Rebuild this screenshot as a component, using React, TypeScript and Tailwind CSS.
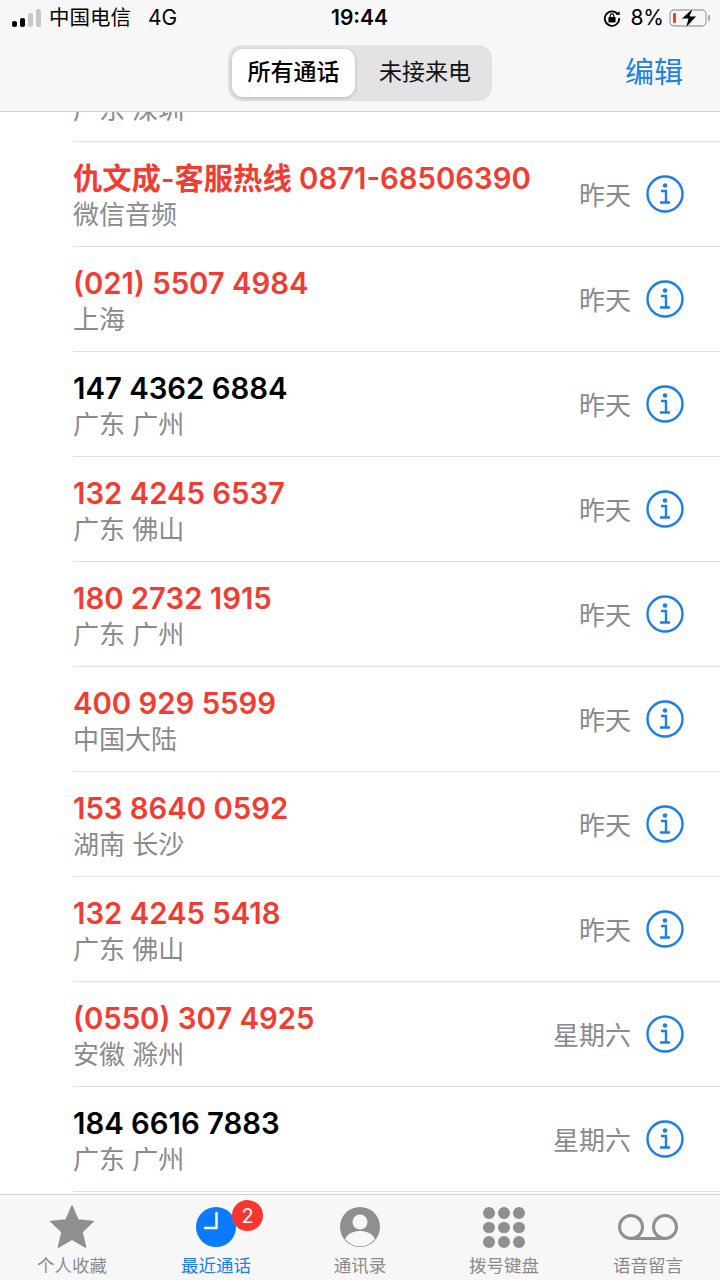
import React from 'react';

const calls = [
  { name: '\u00a0', place: '广东 深圳', time: '', missed: false },
  { name: '仇文成-客服热线 0871-68506390', place: '微信音频', time: '昨天', missed: true },
  { name: '(021) 5507 4984', place: '上海', time: '昨天', missed: true },
  { name: '147 4362 6884', place: '广东 广州', time: '昨天', missed: false },
  { name: '132 4245 6537', place: '广东 佛山', time: '昨天', missed: true },
  { name: '180 2732 1915', place: '广东 广州', time: '昨天', missed: true },
  { name: '400 929 5599', place: '中国大陆', time: '昨天', missed: true },
  { name: '153 8640 0592', place: '湖南 长沙', time: '昨天', missed: true },
  { name: '132 4245 5418', place: '广东 佛山', time: '昨天', missed: true },
  { name: '(0550) 307 4925', place: '安徽 滁州', time: '星期六', missed: true },
  { name: '184 6616 7883', place: '广东 广州', time: '星期六', missed: false },
];

function InfoIcon() {
  return (
    <svg width="38" height="38" viewBox="0 0 38 38" fill="none">
      <circle cx="19" cy="19" r="17.5" stroke="#1a7fe8" strokeWidth="2.4" />
      <circle cx="19" cy="10.5" r="2.3" fill="#1a7fe8" />
      <path d="M15 16h5v11M14 27.500h10" stroke="#1a7fe8" strokeWidth="2.4" />
    </svg>
  );
}

function Row({ name, place, time, missed, first }: { name: string; place: string; time: string; missed: boolean; first?: boolean }) {
  return (
    <div className={`flex h-[105px] shrink-0 items-center border-b border-[#e2e2e4] pr-[36px] ${first ? '-mt-[75px]' : ''}`}>
      <div className="min-w-0 flex-1 pt-[4px]">
        <div className={`text-[29.300px] font-semibold leading-[36px] whitespace-nowrap ${missed ? 'text-[#f23c32]' : 'text-black'}`}>{name}</div>
        <div className="text-[26px] leading-[35px] text-[#8a8a8e]">{place}</div>
      </div>
      {time && <span className="mr-[15px] pt-[2px] text-[26px] text-[#8a8a8e]">{time}</span>}
      <InfoIcon />
    </div>
  );
}

function Tab({ label, active, children }: { label: string; active?: boolean; children: React.ReactNode }) {
  return (
    <div className="relative flex flex-col items-center pt-[12px]">
      <div className="flex h-[40px] items-center">{children}</div>
      <span className={`mt-[8px] text-[17.500px] leading-[22px] whitespace-nowrap ${active ? 'text-[#1a7fe8]' : 'text-[#8a8a8e]'}`}>{label}</span>
    </div>
  );
}

export default function App() {
  return (
    <div className="flex h-[1280px] w-[720px] flex-col overflow-hidden bg-white" style={{ fontFamily: 'Inter, "Noto Sans CJK SC", sans-serif' }}>
      {/* Top bars */}
      <header className="relative z-10 h-[112px] shrink-0 border-b border-[#cfcfd1] bg-[#f8f7f8]">
        <div className="flex h-[36px] items-center justify-between pl-[12px] pr-[9px] text-black">
          <div className="flex items-center">
            <svg width="30" height="20" viewBox="0 0 30 20" fill="#000">
              <rect x="0" y="13" width="5" height="6" rx="2" />
              <rect x="8" y="10" width="5" height="9" rx="2" />
              <rect x="16" y="5" width="5" height="14" rx="2" fill="#c8c8c8" />
              <rect x="24" y="1" width="5" height="18" rx="2" fill="#c8c8c8" />
            </svg>
            <span className="ml-[7px] text-[20.500px]">中国电信</span>
            <span className="ml-[17px] text-[21px]">4G</span>
          </div>
          <span className="absolute left-[331px] text-[21px] font-semibold">19:44</span>
          <div className="flex items-center">
            <svg width="18" height="18" viewBox="0 0 20 20" fill="none">
              <path d="M16.500 6A8 8 0 1 0 18 10" stroke="#000" strokeWidth="2" />
              <path d="M14 6.500h5l-1-4z" fill="#000" />
              <rect x="6" y="9" width="8" height="6" rx="1" fill="#000" />
              <path d="M8 9V7.500a2 2 0 0 1 4 0V9" stroke="#000" strokeWidth="1.300" />
            </svg>
            <span className="ml-[9px] text-[21px]">8%</span>
            <svg className="ml-[5px]" width="42" height="22" viewBox="0 0 42 22" fill="none">
              <rect x="1" y="3" width="36" height="16" rx="4" stroke="#a8a8a8" strokeWidth="1.300" />
              <rect x="4" y="6" width="3" height="10" rx="1" fill="#f23c32" />
              <path d="M25 0 12 12h7l-3 10 12-13h-7z" fill="#000" stroke="#f8f7f8" strokeWidth="1" />
              <rect x="39" y="8" width="2" height="6" rx="1" fill="#a8a8a8" />
            </svg>
          </div>
        </div>
        <div className="relative flex h-[75px] items-center justify-center pb-[2px]">
          <div className="flex h-[56px] w-[264px] items-center rounded-[14px] bg-[#e3e3e5] p-[4px] pr-0">
            <div className="flex h-[48px] w-[123px] items-center justify-center rounded-[11px] bg-white text-[23px] font-medium text-black shadow-[0_1px_4px_rgba(0,0,0,0.2)]">所有通话</div>
            <div className="flex-1 pl-[3px] text-center text-[23px] text-[#111]">未接来电</div>
          </div>
          <span className="absolute right-[37px] text-[29px] text-[#1a7fe8]">编辑</span>
        </div>
      </header>

      {/* Call list */}
      <main className="min-h-0 flex-1 overflow-hidden pl-[73px]">
        {calls.map((c, i) => (
          <Row key={i} {...c} first={i === 0} />
        ))}
      </main>

      {/* Tab bar */}
      <nav className="relative z-10 grid h-[86px] shrink-0 grid-cols-5 border-t border-[#cfcfd1] bg-[#f8f7f8]">
        <Tab label="个人收藏">
          <svg className="-mt-[3px]" width="46" height="44" viewBox="0 0 46 44" fill="#8f8f8f">
            <path d="M23 2 29 16 44 17.500 33 28 36.500 43 23 35 9.500 43 13 28 2 17.500 17 16Z" stroke="#8f8f8f" strokeWidth="1.500" strokeLinejoin="round" />
          </svg>
        </Tab>
        <Tab label="最近通话" active>
          <svg width="40" height="40" viewBox="0 0 40 40">
            <circle cx="20" cy="20" r="20" fill="#0a7aff" />
            <path d="M20.500 6v15h-11.500" fill="none" stroke="#fff" strokeWidth="2.500" strokeLinecap="round" strokeLinejoin="round" />
          </svg>
          <span className="absolute left-[88px] top-[5px] flex h-[31px] w-[31px] items-center justify-center rounded-full bg-[#f9352f] text-[20px] text-white">2</span>
        </Tab>
        <Tab label="通讯录">
          <svg width="40" height="40" viewBox="0 0 40 40">
            <circle cx="20" cy="20" r="20" fill="#8f8f8f" />
            <circle cx="20" cy="15" r="7.500" fill="#f8f7f8" />
            <path d="M5 32c3-6 9-8 15-8s12 2 15 8a19 19 0 0 1-30 0Z" fill="#f8f7f8" />
          </svg>
        </Tab>
        <Tab label="拨号键盘">
          <div className="grid h-[40px] w-[42px] grid-cols-3 gap-[3px]">
            {Array.from({ length: 9 }).map((_, i) => (
              <span key={i} className="h-[11.500px] w-[12px] rounded-full bg-[#8f8f8f]" />
            ))}
          </div>
        </Tab>
        <Tab label="语音留言">
          <svg width="60" height="40" viewBox="0 0 60 40" fill="none">
            <circle cx="13" cy="20" r="11.500" stroke="#8f8f8f" strokeWidth="3" />
            <circle cx="47" cy="20" r="11.500" stroke="#8f8f8f" strokeWidth="3" />
            <path d="M13 31.500h34" stroke="#8f8f8f" strokeWidth="3" />
          </svg>
        </Tab>
      </nav>
    </div>
  );
}
